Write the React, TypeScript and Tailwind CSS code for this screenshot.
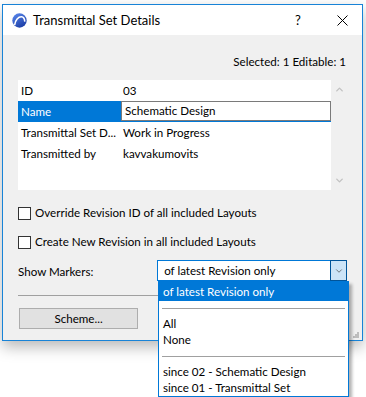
import { ChevronDown, ChevronUp } from "lucide-react";

const rows = [
  { label: "ID", value: "03" },
  { label: "Name", value: "Schematic Design", editing: true },
  { label: "Transmittal Set D...", value: "Work in Progress" },
  { label: "Transmitted by", value: "kavvakumovits" },
];

function AppIcon() {
  return (
    <svg width="15" height="15" viewBox="0 0 15 15">
      <defs>
        <linearGradient id="logo" x1="0" y1="0" x2="0.6" y2="1">
          <stop offset="0" stopColor="#5d8cf0" />
          <stop offset="1" stopColor="#1d3fa8" />
        </linearGradient>
      </defs>
      <circle cx="7.5" cy="7.5" r="7.2" fill="url(#logo)" />
      <path d="M2.6 12.2 C3.2 7 6.4 3.6 9.6 3.8 C11.6 4 12.6 6 12.8 8.6" fill="none" stroke="#fff" strokeWidth="1.6" />
    </svg>
  );
}

function Checkbox({ label }: { label: string }) {
  return (
    <div className="flex items-center h-[16px]">
      <div className="w-[13px] h-[13px] border border-[#333333] bg-white" />
      <span className="ml-[4px]">{label}</span>
    </div>
  );
}

export default function App() {
  return (
    <div className="w-[366px] h-[397px] bg-white relative overflow-hidden font-['Lato',sans-serif] text-[11.6px] text-black leading-none">
      <div className="ml-[2px] mt-[4px] w-[361px] h-[337px] border border-[#1883d7] bg-[#f0f0f0] shadow-[0_6px_14px_rgba(0,0,0,0.28)] flex flex-col relative">
        <div className="h-[30px] bg-white flex items-center pl-[9px]">
          <AppIcon />
          <span className="ml-[6px] text-[13px]">Transmittal Set Details</span>
          <span className="ml-auto w-[14px] text-center text-[13px]">?</span>
          <svg className="ml-[32px] mr-[14px]" width="11" height="11" viewBox="0 0 11 11">
            <path d="M0.5 0.5 L10.5 10.5 M10.5 0.5 L0.5 10.5" stroke="#000" strokeWidth="1" />
          </svg>
        </div>

        <div className="flex flex-col px-[15px]">
          <div className="mt-[19px] h-[16px] flex items-center justify-end pr-[1px]">Selected: 1 Editable: 1</div>

          <div className="mt-[10px] h-[110px] flex">
            <div className="w-[314px] bg-white flex flex-col">
              {rows.map((r) => (
                <div key={r.label} className="h-[21px] flex">
                  <div
                    className={`w-[103px] pl-[3px] flex items-center ${r.editing ? "bg-[#0078d7] text-white" : ""}`}
                  >
                    {r.label}
                  </div>
                  {r.editing ? (
                    <div className="w-[210px] flex flex-col">
                      <div className="h-[20px] border border-[#7a7a7a] pl-[3px] flex items-center">{r.value}</div>
                      <div className="h-[1px] bg-[#0078d7] -ml-[103px] w-[313px]" />
                    </div>
                  ) : (
                    <div className="pl-[2px] flex items-center">{r.value}</div>
                  )}
                </div>
              ))}
            </div>
            <div className="w-[20px] flex flex-col items-center justify-between py-[4px] text-[#c2c2c2]">
              <ChevronUp size={11} strokeWidth={3} />
              <ChevronDown size={11} strokeWidth={3} />
            </div>
          </div>

          <div className="mt-[15px]">
            <Checkbox label="Override Revision ID of all included Layouts" />
          </div>
          <div className="mt-[13px]">
            <Checkbox label="Create New Revision in all included Layouts" />
          </div>

          <div className="mt-[10px] flex items-center">
            <span className="w-[140px] pt-[2px]">Show Markers:</span>
            <div className="w-[191px] h-[21px] border border-[#0078d7] bg-white flex">
              <div className="flex-1 pl-[6px] flex items-center">of latest Revision only</div>
              <div className="w-[17px] -my-[1px] -mr-[1px] border border-[#005499] bg-[#cce4f7] flex items-center justify-center">
                <ChevronDown size={10} strokeWidth={1.5} className="text-[#333]" />
              </div>
            </div>
          </div>

          <div className="mt-[14px] h-[1px] bg-[#a0a0a0] mr-[-2px]" />

          <div className="mt-[12px]">
            <button className="w-[119px] h-[21px] ml-[1px] border border-[#adadad] bg-[#e1e1e1] flex items-center justify-center">
              Scheme...
            </button>
          </div>
        </div>

        <svg className="absolute right-[3px] bottom-[2px]" width="7" height="7" viewBox="0 0 7 7">
          <rect x="5" y="1" width="2" height="2" fill="#bdbdbd" />
          <rect x="3" y="3" width="2" height="2" fill="#bdbdbd" />
          <rect x="5" y="3" width="2" height="2" fill="#bdbdbd" />
          <rect x="1" y="5" width="2" height="2" fill="#bdbdbd" />
          <rect x="3" y="5" width="2" height="2" fill="#bdbdbd" />
          <rect x="5" y="5" width="2" height="2" fill="#bdbdbd" />
        </svg>
      </div>

      <div className="absolute left-[158px] top-[281px] w-[191px] border border-[#0078d7] bg-white shadow-[3px_3px_3px_rgba(0,0,0,0.3)] flex flex-col">
        <div className="h-[19px] bg-[#0078d7] text-white pl-[4px] flex items-center">of latest Revision only</div>
        <div className="h-[15px] flex items-center px-[3px]">
          <div className="h-[1px] w-full bg-[#a0a0a0]" />
        </div>
        <div className="h-[16px] pl-[4px] flex items-center">All</div>
        <div className="h-[16px] pl-[4px] flex items-center">None</div>
        <div className="h-[16px] flex items-center px-[3px]">
          <div className="h-[1px] w-full bg-[#a0a0a0]" />
        </div>
        <div className="h-[16px] pl-[4px] flex items-center">since 02 - Schematic Design</div>
        <div className="h-[16px] pl-[4px] flex items-center">since 01 - Transmittal Set</div>
      </div>
    </div>
  );
}
